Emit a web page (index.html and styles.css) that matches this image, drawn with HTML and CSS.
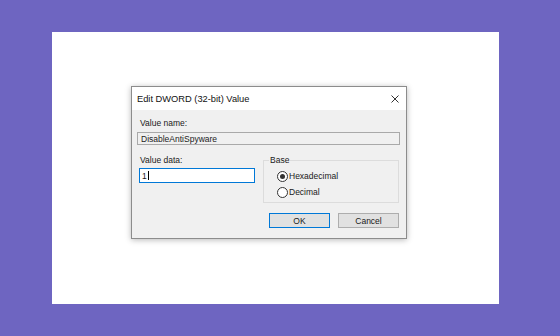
FILE: index.html
```html
<!DOCTYPE html>
<html>
<head>
<meta charset="utf-8">
<link rel="stylesheet" href="styles.css">
</head>
<body>
<div class="panel">
  <div class="dialog">
    <div class="titlebar">
      <span class="title">Edit DWORD (32-bit) Value</span>
      <svg class="close" width="8" height="8" viewBox="0 0 8 8"><path d="M0.5 0.5L7.5 7.5M7.5 0.5L0.5 7.5" stroke="#333" stroke-width="1" fill="none"/></svg>
    </div>
    <div class="body">
      <div class="label">Value name:</div>
      <div class="field disabled">DisableAntiSpyware</div>
      <div class="row">
        <div class="col">
          <div class="label">Value data:</div>
          <div class="field active">1<span class="caret"></span></div>
        </div>
        <fieldset class="group">
          <legend>Base</legend>
          <div class="radio"><span class="dot on"></span>Hexadecimal</div>
          <div class="radio"><span class="dot"></span>Decimal</div>
        </fieldset>
      </div>
      <div class="buttons">
        <div class="btn default">OK</div>
        <div class="btn">Cancel</div>
      </div>
    </div>
  </div>
</div>
</body>
</html>
```
FILE: styles.css
```css
html, body { margin: 0; padding: 0; }
body {
  width: 560px; height: 336px;
  background: #6e65c1;
  font-family: "Liberation Sans", Arial, sans-serif;
  color: #1a1a1a;
  padding: 32px 0 0 52px;
  box-sizing: border-box;
}
.panel {
  width: 447px; height: 272px;
  background: #fff;
  box-sizing: border-box;
  padding: 54px 0 0 79px;
}
.dialog {
  width: 276px;
  box-sizing: border-box;
  border: 1px solid #8c8c8c;
  background: #f0f0f0;
  box-shadow: 0 1px 6px rgba(0,0,0,0.28);
}
.titlebar {
  height: 23px;
  background: #fff;
  display: flex;
  align-items: center;
  justify-content: space-between;
  padding: 0 6px 0 5px;
}
.title { font-size: 9.3px; color: #111; }
.close { margin-right: 1px; margin-top: 1px; }
.body {
  padding: 5px 6px 10px 5px;
  font-size: 8.5px;
}
.label { margin-left: 3px; height: 12px; line-height: 12px; margin-top: 2px; }
.field {
  box-sizing: border-box;
  border: 1px solid #a9a9a9;
  padding-left: 3px;
  display: flex;
  align-items: center;
}
.field.disabled {
  height: 13px;
  margin-top: 3px;
  background: #f0f0f0;
  color: #222;
}
.row {
  display: grid;
  grid-template-columns: 118px 136px;
  column-gap: 8px;
  margin-top: 9px;
}
.col { padding-left: 2px; }
.col .label { margin-top: 0; margin-left: 1px; }
.field.active {
  height: 15px;
  margin-top: 2px;
  background: #fff;
  border-color: #0078d7;
  padding-left: 2px;
}
.caret { display: inline-block; width: 1px; height: 9px; background: #000; margin-left: 1px; }
.group {
  margin: 0;
  margin-top: 1px;
  padding: 3px 0 4px 13px;
  border: 1px solid #dcdcdc;
  height: 48px;
  box-sizing: border-box;
  min-width: 0;
}
.group legend { padding: 0 1px; margin-left: -8px; line-height: 10px; }
.radio {
  display: flex;
  align-items: center;
  height: 16px;
}
.dot {
  width: 11px; height: 11px;
  box-sizing: border-box;
  border: 1px solid #333;
  border-radius: 50%;
  background: #fff;
  margin-right: 1px;
  display: flex;
  align-items: center;
  justify-content: center;
}
.dot.on::after {
  content: "";
  width: 5px; height: 5px;
  border-radius: 50%;
  background: #333;
}
.buttons {
  display: flex;
  justify-content: flex-end;
  gap: 8px;
  margin-top: 10px;
  padding-right: 1px;
}
.btn {
  width: 61px; height: 15px;
  box-sizing: border-box;
  border: 1px solid #adadad;
  background: #e1e1e1;
  display: flex;
  align-items: center;
  justify-content: center;
}
.btn.default { border-color: #0078d7; }
```
